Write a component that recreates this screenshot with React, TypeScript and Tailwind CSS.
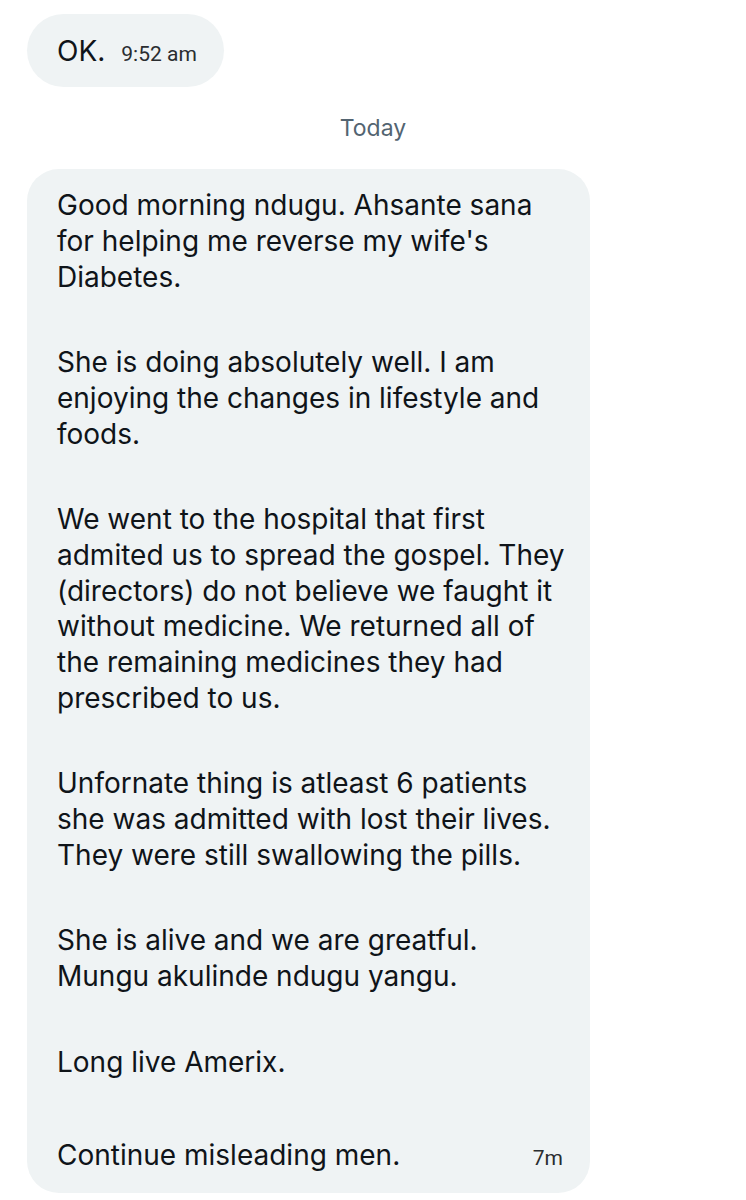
import React from "react";

const paragraphs: string[][] = [
  ["Good morning ndugu. Ahsante sana", "for helping me reverse my wife's", "Diabetes."],
  ["She is doing absolutely well. I am", "enjoying the changes in lifestyle and", "foods."],
  [
    "We went to the hospital that first",
    "admited us to spread the gospel. They",
    "(directors) do not believe we faught it",
    "without medicine. We returned all of",
    "the remaining medicines they had",
    "prescribed to us.",
  ],
  ["Unfornate thing is atleast 6 patients", "she was admitted with lost their lives.", "They were still swallowing the pills."],
  ["She is alive and we are greatful.", "Mungu akulinde ndugu yangu."],
  ["Long live Amerix."],
];

export default function App() {
  return (
    <div className="w-[746px] h-[1200px] bg-white overflow-hidden font-['Inter',sans-serif] text-[#0f1419]">
      <div className="pt-[14px] pl-[27px]">
        <div className="inline-flex items-baseline h-[73px] rounded-full bg-[#eff3f4] pl-[30px] pr-[27px] pt-[20px]">
          <span className="text-[28px] leading-[34px]">OK.</span>
          <span className="ml-[16px] text-[21px] text-[#2a2d30] font-['Roboto',sans-serif]">9:52 am</span>
        </div>
      </div>
      <div className="mt-[27px] text-center text-[23px] leading-[28px] text-[#536471]">Today</div>
      <div className="mt-[27px] ml-[27px] w-[563px] rounded-[32px] bg-[#eff3f4] pl-[30px] pr-[27px] pt-[19px] pb-[16px] text-[28px] leading-[35.8px]">
        {paragraphs.map((p, i) => (
          <div key={i} className={i === 0 ? "" : "mt-[49.6px]"}>
            {p.map((l, j) => (
              <div key={j} className="whitespace-nowrap">
                {l}
              </div>
            ))}
          </div>
        ))}
        <div className="mt-[58px] flex items-baseline justify-between">
          <span className="whitespace-nowrap">Continue misleading men.</span>
          <span className="text-[21px] text-[#2a2d30] font-['Roboto',sans-serif]">7m</span>
        </div>
      </div>
    </div>
  );
}
